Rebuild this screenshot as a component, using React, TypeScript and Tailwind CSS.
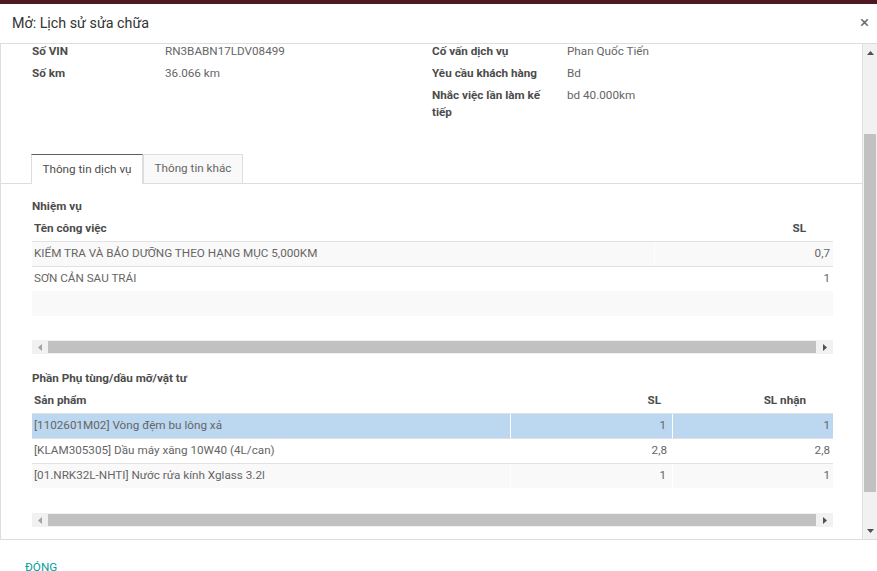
import React from "react";

const font = { fontFamily: "Roboto, 'Noto Sans', 'Liberation Sans', sans-serif" };

function HScroll() {
  return (
    <div className="flex h-[14px] bg-[#f1f1f1] items-center">
      <div className="w-[16px] flex items-center justify-center">
        <svg width="4" height="7" viewBox="0 0 4 7"><path d="M4 0 L0 3.5 L4 7 Z" fill="#a3a3a3" /></svg>
      </div>
      <div className="flex-1 h-[12px] bg-[#c1c1c1]" />
      <div className="w-[17px] flex items-center justify-center">
        <svg width="4" height="7" viewBox="0 0 4 7"><path d="M0 0 L4 3.5 L0 7 Z" fill="#505050" /></svg>
      </div>
    </div>
  );
}

function FormRow({ label, value, wide }: { label: string; value: string; wide?: boolean }) {
  return (
    <div className="flex py-[2.5px]">
      <div className={(wide ? "w-[135px] pr-[15px]" : "w-[133px] pr-[13px]") + " font-bold text-[#4c4c4c] leading-[17px]"}>{label}</div>
      <div className="flex-1 text-[#666] leading-[17px]">{value}</div>
    </div>
  );
}

export default function App() {
  return (
    <div className="w-[877px] h-[571px] overflow-hidden bg-white text-[11.7px] flex flex-col" style={font}>
      <div className="h-[4px] bg-[#4d1a22] shrink-0" />
      <div className="h-[40px] flex items-center justify-between pl-[12px] pr-[8px] border-b border-[#dddddd] shrink-0">
        <div className="text-[14.3px] text-[#333]">Mở: Lịch sử sửa chữa</div>
        <div className="text-[#666] text-[17px] leading-none pb-[2px]">×</div>
      </div>
      <div className="flex h-[496px] shrink-0 border-b border-[#dddddd]">
        <div className="flex-1 overflow-hidden border-l border-[#dddddd]">
          <div className="-mt-[4px]">
            <div className="flex pl-[31px]">
              <div className="w-[400px]">
                <FormRow label="Số VIN" value="RN3BABN17LDV08499" />
                <FormRow label="Số km" value="36.066 km" />
              </div>
              <div className="w-[300px]">
                <FormRow wide label="Cố vấn dịch vụ" value="Phan Quốc Tiến" />
                <FormRow wide label="Yêu cầu khách hàng" value="Bd" />
                <FormRow wide label="Nhắc việc lần làm kế tiếp" value="bd 40.000km" />
              </div>
            </div>
            <div className="mt-[31px] flex border-b border-[#dddddd] pl-[30px] h-[30px]">
              <div className="w-[112px] h-[30px] flex items-center justify-center border border-b-0 border-[#dddddd] border-t-[#5f5e5e] bg-white text-[#4c4c4c] -mb-px">
                Thông tin dịch vụ
              </div>
              <div className="w-[100px] h-[29px] flex items-center justify-center border border-b-0 border-[#dddddd] bg-[#f9f9f9] text-[#666]">
                Thông tin khác
              </div>
            </div>
            <div className="pl-[31px] pr-[29px]">
              <div className="mt-[14px] font-bold text-[#4c4c4c] leading-[17px]">Nhiệm vụ</div>
              <div className="mt-[2px]">
                <div className="flex h-[24px] items-center font-bold text-[#4c4c4c]">
                  <div className="flex-1 pl-[2px]">Tên công việc</div>
                  <div className="w-[178px] text-right pr-[27px]">SL</div>
                </div>
                <div className="flex h-[25px] items-center bg-[#f9f9f9] border-t border-[#e2e2e2] text-[#666]">
                  <div className="flex-1 pl-[2px] h-full flex items-center border-r border-white">KIỂM TRA VÀ BẢO DƯỠNG THEO HẠNG MỤC 5,000KM</div>
                  <div className="w-[178px] text-right pr-[3px]">0,7</div>
                </div>
                <div className="flex h-[25px] items-center bg-white border-t border-[#e2e2e2] text-[#666]">
                  <div className="flex-1 pl-[2px]">SƠN CẢN SAU TRÁI</div>
                  <div className="w-[178px] text-right pr-[3px]">1</div>
                </div>
                <div className="h-[25px] bg-[#f9f9f9]" />
              </div>
              <div className="mt-[24px]">
                <HScroll />
              </div>
              <div className="mt-[16px] font-bold text-[#4c4c4c] leading-[17px]">Phần Phụ tùng/dầu mỡ/vật tư</div>
              <div className="mt-[2px]">
                <div className="flex h-[24px] items-center font-bold text-[#4c4c4c]">
                  <div className="flex-1 pl-[2px]">Sản phẩm</div>
                  <div className="w-[162px] text-right pr-[12px]">SL</div>
                  <div className="w-[160px] text-right pr-[27px]">SL nhận</div>
                </div>
                <div className="flex h-[25px] items-center bg-[#bcd7f0] border-t border-[#e2e2e2] text-[#666]">
                  <div className="flex-1 pl-[2px] h-full flex items-center border-r border-white">[1102601M02] Vòng đệm bu lông xả</div>
                  <div className="w-[162px] h-full flex items-center justify-end pr-[6px] border-r border-white">1</div>
                  <div className="w-[160px] text-right pr-[3px]">1</div>
                </div>
                <div className="flex h-[25px] items-center bg-white border-t border-[#e2e2e2] text-[#666]">
                  <div className="flex-1 pl-[2px]">[KLAM305305] Dầu máy xăng 10W40 (4L/can)</div>
                  <div className="w-[162px] text-right pr-[6px]">2,8</div>
                  <div className="w-[160px] text-right pr-[3px]">2,8</div>
                </div>
                <div className="flex h-[25px] items-center bg-[#f9f9f9] border-t border-[#e2e2e2] text-[#666]">
                  <div className="flex-1 pl-[2px] h-full flex items-center border-r border-white">[01.NRK32L-NHTI] Nước rửa kính Xglass 3.2l</div>
                  <div className="w-[162px] h-full flex items-center justify-end pr-[6px] border-r border-white">1</div>
                  <div className="w-[160px] text-right pr-[3px]">1</div>
                </div>
              </div>
              <div className="mt-[25px]">
                <HScroll />
              </div>
            </div>
          </div>
        </div>
        <div className="w-[15px] bg-[#f1f1f1] border-l border-[#e0e0e0] flex flex-col items-center">
          <div className="h-[17px] flex items-center justify-center">
            <svg width="7" height="4" viewBox="0 0 7 4"><path d="M0 4 L3.5 0 L7 4 Z" fill="#505050" /></svg>
          </div>
          <div className="mt-[73px] w-[12px] h-[358px] bg-[#c1c1c1]" />
          <div className="flex-1" />
          <div className="h-[17px] flex items-center justify-center">
            <svg width="7" height="4" viewBox="0 0 7 4"><path d="M0 0 L3.5 4 L7 0 Z" fill="#505050" /></svg>
          </div>
        </div>
      </div>
      <div className="pl-[25px] pt-[19px] text-[#00a09d] text-[11.7px] leading-[17px]">ĐÓNG</div>
    </div>
  );
}
